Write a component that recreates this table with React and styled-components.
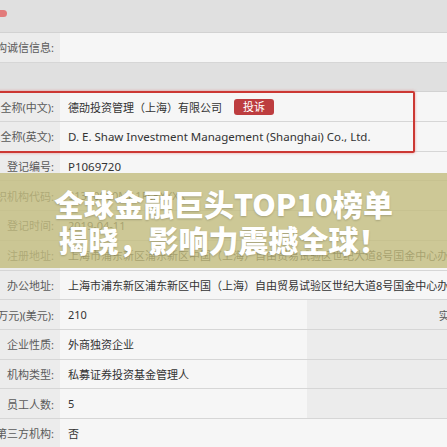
import React from "react";
import styled, { createGlobalStyle } from "styled-components";

const Global = createGlobalStyle`
  html, body { margin: 0; padding: 0; background: #f6f6f6; }
  body { overflow: hidden; }
`;

const Page = styled.div`
  position: relative;
  width: 447px;
  height: 447px;
  overflow: hidden;
  background: #f6f6f6;
  font-family: "Noto Sans", "Noto Sans CJK SC", sans-serif;
`;

const Table = styled.div`
  width: 820px;
`;

const Band = styled.div`
  display: flex;
  align-items: flex-start;
  height: ${(p) => p.h}px;
  box-sizing: border-box;
  background: #e0e0e0;
  border-bottom: 1px solid #d2d2d2;
`;

const Mark = styled.span`
  display: block;
  width: 7px;
  height: 7px;
  margin-top: 10px;
  border-radius: 0 60% 60% 0;
  background: #e27b7b;
`;

const Row = styled.div`
  display: flex;
  height: 29.7px;
  box-sizing: border-box;
  background: #f6f6f6;
  border-bottom: 1px solid #d6d6d6;
  font-size: 11px;
`;

const Label = styled.div`
  flex: 0 0 ${(p) => p.w || 60}px;
  box-sizing: border-box;
  display: flex;
  align-items: center;
  justify-content: flex-end;
  padding-right: 6px;
  overflow: hidden;
  white-space: nowrap;
  background: #ececec;
  color: #5a5a5a;
`;

const Value = styled.div`
  flex: ${(p) => (p.w ? `0 0 ${p.w}px` : "1")};
  box-sizing: border-box;
  display: flex;
  align-items: center;
  gap: 12px;
  padding-left: 8px;
  overflow: hidden;
  white-space: nowrap;
  color: #333;
  font-size: ${(p) => (p.latin ? "11.5px" : "inherit")};
`;

const Tag = styled.span`
  display: inline-block;
  height: 16px;
  line-height: 16px;
  padding: 0 9px;
  border-radius: 3px;
  background: #bd3d3f;
  color: #fff;
  font-size: 11px;
`;

const Highlight = styled.div`
  position: relative;
  &::after {
    content: "";
    position: absolute;
    left: -6px;
    top: -1px;
    width: 421px;
    bottom: -1px;
    box-sizing: border-box;
    border: 2px solid #cc3833;
    border-radius: 2px;
    box-shadow: 0 0 3px rgba(230, 90, 90, 0.6);
    pointer-events: none;
  }
`;

const Banner = styled.div`
  position: absolute;
  left: 0;
  right: 0;
  top: 173px;
  height: 95px;
  display: flex;
  flex-direction: column;
  align-items: center;
  justify-content: center;
  background: rgba(195, 189, 126, 0.8);
  color: #fff;
  font-family: "Noto Sans CJK SC", sans-serif;
  font-weight: 900;
  font-size: 30px;
  line-height: 36px;
  text-shadow: 0 1px 2px rgba(0, 0, 0, 0.2);
`;

const rows = [
  ["组织机构代码:", "91310000MA1FL5XXXX"],
  ["登记时间:", "2019-04-11"],
  ["注册地址:", "上海市浦东新区浦东新区中国（上海）自由贸易试验区世纪大道8号国金中心办公楼"],
  ["办公地址:", "上海市浦东新区浦东新区中国（上海）自由贸易试验区世纪大道8号国金中心办公楼"],
];

const pairs = [
  ["注册资本(万元)(美元):", "210", "实缴资本(万元)(美元):"],
  ["企业性质:", "外商独资企业", "注册资本实缴比例:"],
  ["机构类型:", "私募证券投资基金管理人", "业务类型:"],
  ["员工人数:", "5", "机构网址:"],
];

export default function App() {
  return (
    <Page>
      <Global />
      <Table>
        <Band h={33}>
          <Mark />
        </Band>
        <Row>
          <Label>机构诚信信息:</Label>
          <Value />
        </Row>
        <Band h={29.7} />
        <Highlight>
          <Row>
            <Label>基金管理人全称(中文):</Label>
            <Value>
              德劭投资管理（上海）有限公司
              <Tag>投诉</Tag>
            </Value>
          </Row>
          <Row>
            <Label>基金管理人全称(英文):</Label>
            <Value latin>D. E. Shaw Investment Management (Shanghai) Co., Ltd.</Value>
          </Row>
        </Highlight>
        <Row>
          <Label>登记编号:</Label>
          <Value latin>P1069720</Value>
        </Row>
        {rows.map(([l, v]) => (
          <Row key={l}>
            <Label>{l}</Label>
            <Value>{v}</Value>
          </Row>
        ))}
        {pairs.map(([l, v, l2]) => (
          <Row key={l}>
            <Label>{l}</Label>
            <Value w={247}>{v}</Value>
            <Label w={242}>{l2}</Label>
            <Value />
          </Row>
        ))}
        <Row>
          <Label>是否为符合提供投资建议条件的第三方机构:</Label>
          <Value>否</Value>
        </Row>
      </Table>
      <Banner>
        <div>全球金融巨头TOP10榜单</div>
        <div>揭晓，影响力震撼全球！</div>
      </Banner>
    </Page>
  );
}
